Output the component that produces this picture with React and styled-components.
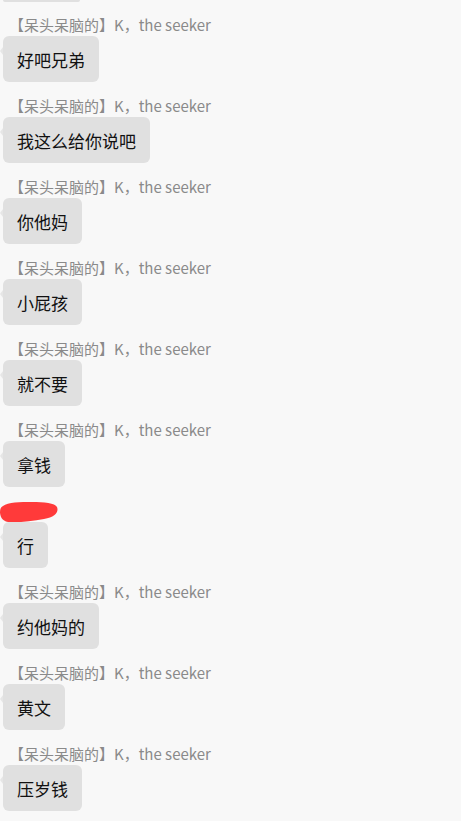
import React from "react";
import styled, { createGlobalStyle } from "styled-components";

const Global = createGlobalStyle`
  html, body { margin: 0; padding: 0; background: #f8f8f8; }
  body { font-family: "Noto Sans CJK SC", "Noto Sans", sans-serif; overflow: hidden; }
`;

const List = styled.div`
  display: flex;
  flex-direction: column;
  height: 821px;
  overflow: hidden;
`;

const Stub = styled.div`
  flex: none;
  width: 77px;
  height: 2px;
  margin-left: 3px;
  margin-bottom: 13px;
  background: #e0e0e0;
  border-radius: 0 0 4px 4px;
`;

const Item = styled.div`
  flex: none;
  display: flex;
  flex-direction: column;
  align-items: flex-start;
  margin-bottom: 14px;
`;

const Name = styled.div`
  height: 20px;
  line-height: 20px;
  padding-left: ${(p) => (p.$masked ? "0" : "9px")};
  font-size: 15px;
  color: #8a8a8a;
  margin-bottom: 1px;
  white-space: nowrap;
  display: flex;
  align-items: center;
`;

const Bubble = styled.div`
  position: relative;
  margin-left: 3px;
  height: 46px;
  box-sizing: border-box;
  padding: 0 14px;
  display: flex;
  align-items: center;
  background: #e0e0e0;
  border-radius: 6px;
  font-size: 17px;
  color: #111;
  white-space: nowrap;
  &::before {
    content: "";
    position: absolute;
    left: -3px;
    top: 11px;
    border-style: solid;
    border-width: 4px 3px 4px 0;
    border-color: transparent #e6e6e6 transparent transparent;
  }
`;

const ScribbleSvg = styled.svg`
  display: block;
  flex: none;
  margin-top: 4px;
`;

const Scribble = () => (
  <ScribbleSvg width="60" height="24" viewBox="0 0 60 24">
    <path
      d="M3 5 C 8 1, 20 1, 32 1 C 44 1, 55 2, 57 6 C 59 11, 55 16, 44 18 C 32 20, 18 22, 8 21 C 2 20, 0 15, 0 11 C 0 8, 1 6, 3 5 Z"
      fill="#ff3a3a"
    />
  </ScribbleSvg>
);

const NAME = "【呆头呆脑的】K，the seeker";

const messages = [
  { text: "好吧兄弟" },
  { text: "我这么给你说吧" },
  { text: "你他妈" },
  { text: "小屁孩" },
  { text: "就不要" },
  { text: "拿钱" },
  { text: "行", hidden: true },
  { text: "约他妈的" },
  { text: "黄文" },
  { text: "压岁钱" },
];

export default function App() {
  return (
    <>
      <Global />
      <List>
        <Stub />
        {messages.map((m, i) => (
          <Item key={i}>
            <Name $masked={m.hidden}>{m.hidden ? <Scribble /> : NAME}</Name>
            <Bubble>{m.text}</Bubble>
          </Item>
        ))}
      </List>
    </>
  );
}
